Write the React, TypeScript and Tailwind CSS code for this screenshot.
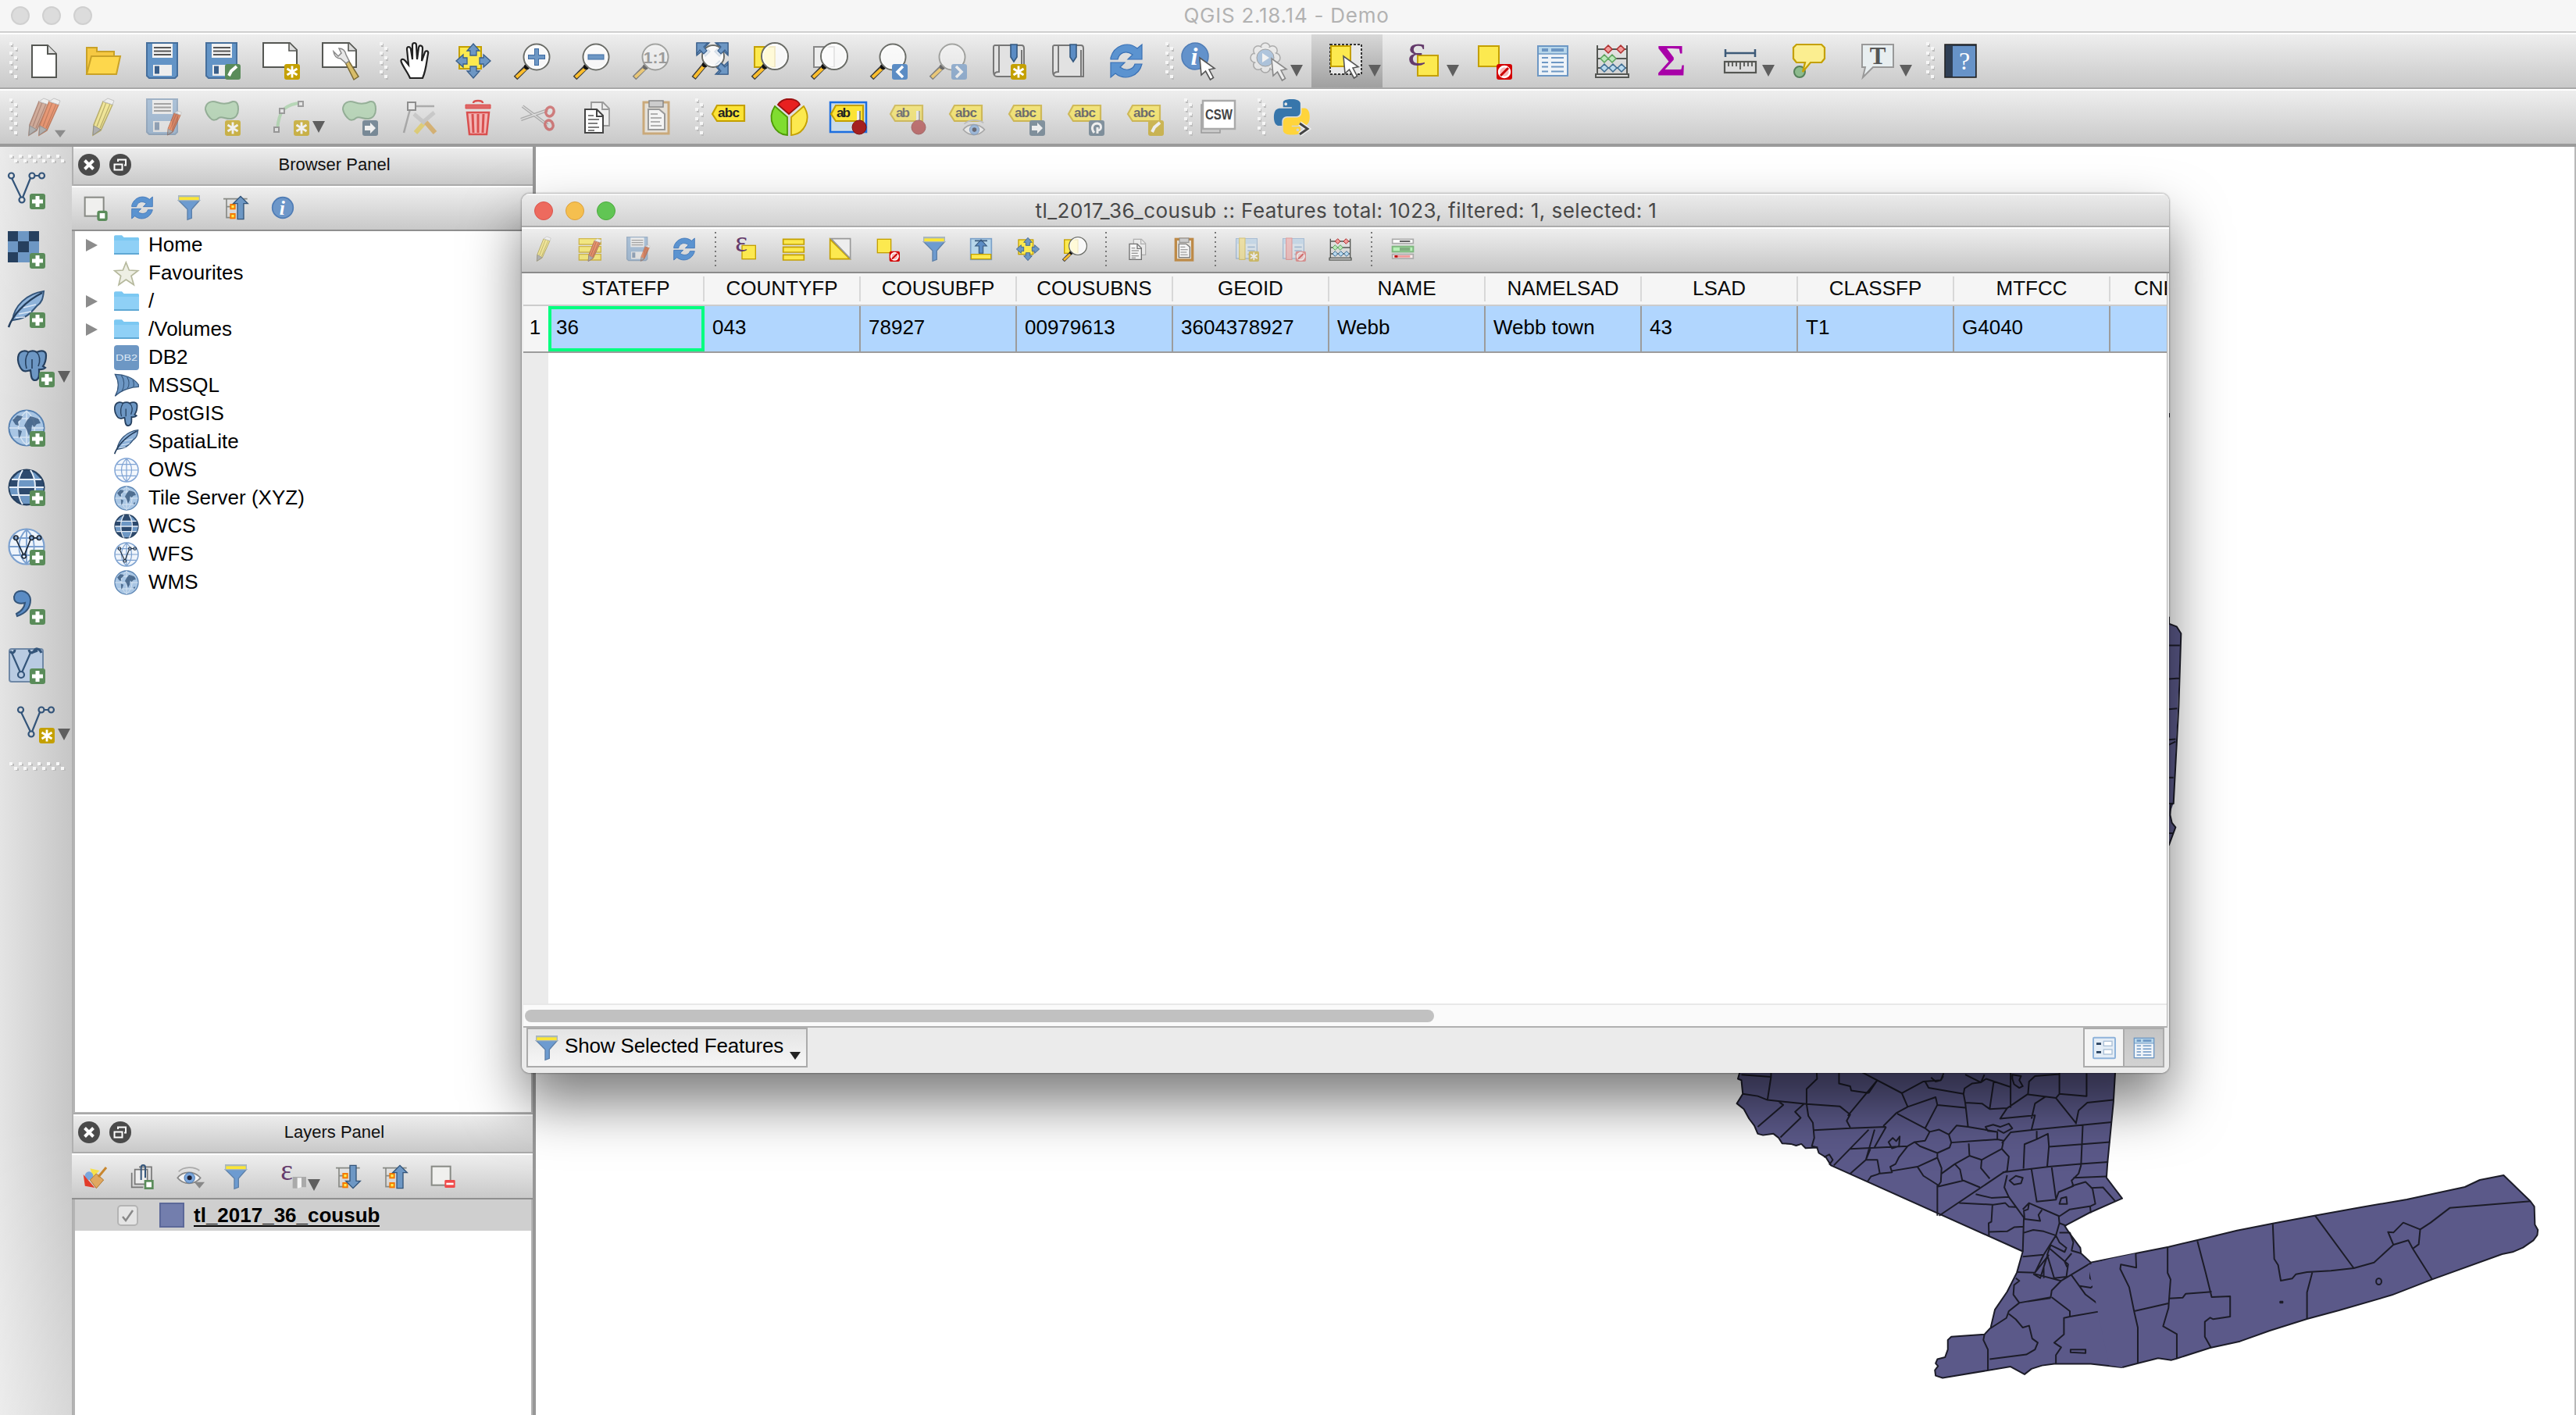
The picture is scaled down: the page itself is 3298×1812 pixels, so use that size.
import React from "react";

type P = { s?: number; o?: number };
type C = P & { children?: React.ReactNode };

const Ic = ({ s = 48, o = 1, children }: C) => (
  <svg width={s} height={s} viewBox="0 0 48 48" opacity={o} className="block shrink-0 overflow-visible" fill="none">
    {children}
  </svg>
);

/* ---------- shared icon parts ---------- */
const Badge = ({ c, k }: { c: string; k: string }) => (
  <g>
    <rect x="28" y="28" width="20" height="20" rx="3" fill={c} />
    {k === "plus" && <path d="M38 31v14M31 38h14" stroke="#fff" strokeWidth="5" />}
    {k === "star" && <path d="M38 30.500v15M31.500 34l13 8M44.500 34l-13 8" stroke="#fff" strokeWidth="2.800" />}
    {k === "pen" && <path d="M33 43l3-6 7-6" stroke="#fff" strokeWidth="4" />}
    {k === "right" && <path d="M31 35h7v-4l7 7-7 7v-4h-7z" fill="#fff" />}
    {k === "rot" && <path d="M35 44c-5-6-2-12 4-12 6 1 6 9 0 9M39 37v8" stroke="#fff" strokeWidth="3" />}
    {k === "lt" && <path d="M42 31l-7 7 7 7" stroke="#fff" strokeWidth="3.500" />}
    {k === "gt" && <path d="M34 31l7 7-7 7" stroke="#fff" strokeWidth="3.500" />}
    {k === "no" && (
      <g>
        <circle cx="38" cy="38" r="7" fill="#f7b9b9" stroke="#fff" strokeWidth="2.500" />
        <path d="M33 43l10-10" stroke="#c00" strokeWidth="3" />
      </g>
    )}
  </g>
);
const GREEN = "#5a8c5a";
const GOLD = "#c4a000";
const RED = "#d40000";
const BLUE = "#6d97c4";

const Lens = ({ cx = 29, cy = 19, r = 16.5, fill = "#fff" }: { cx?: number; cy?: number; r?: number; fill?: string }) => (
  <g>
    <path d={`M${cx - r * 0.75} ${cy + r * 0.75}L2 46`} stroke="#3a3a3a" strokeWidth="6.500" />
    <path d={`M${cx - r * 0.85} ${cy + r * 0.9}L3 45`} stroke="#fcbe2d" strokeWidth="4" />
    <circle cx={cx - r * 0.76} cy={cy + r * 0.76} r="3.500" fill="#111" />
    <circle cx={cx} cy={cy} r={r} fill={fill} fillOpacity="0.780" stroke="#6b6d68" strokeWidth="2" />
    <circle cx={cx} cy={cy} r={r - 2} stroke="#fff" strokeOpacity="0.800" strokeWidth="1.500" />
  </g>
);
const Cursor = ({ x, y }: { x: number; y: number }) => (
  <path d="M0 0l2 22 5.500-5 6 11 4-2.500-5.500-10.500 7-1.500z" transform={`translate(${x} ${y})`} fill="#fff" stroke="#555" strokeWidth="1.600" />
);
const Yel = ({ x, y, w, h }: { x: number; y: number; w: number; h: number }) => (
  <rect x={x} y={y} width={w} height={h} fill="#fce94f" stroke={GOLD} strokeWidth="2" />
);
const Arrow4 = () => (
  <g fill={BLUE} stroke="#3a5f8a" strokeWidth="1.300">
    <path d="M24 2l8 9h-4v6h-8v-6h-4z" />
    <path d="M24 46l8-9h-4v-6h-8v6h-4z" />
    <path d="M2 24l9-8v4h5v8h-5v4z" />
    <path d="M46 24l-9-8v4h-5v8h5v4z" />
  </g>
);
const Eps = ({ x = 0, y = 27, f = 44 }: { x?: number; y?: number; f?: number }) => (
  <text x={x} y={y} fontSize={f} fill="#643a6b" className="font-['Liberation_Serif',serif]">ε</text>
);

/* ---------- main toolbar ---------- */
const Floppy = () => (
  <g>
    <path d="M5 1h38v42l-3 3H7l-3-3V1z" fill="#6394c6" stroke="#466f9c" strokeWidth="2" />
    <rect x="11" y="2" width="26" height="18" fill="#f2f2f2" />
    <path d="M13 7h22M13 11.500h22M13 16h22" stroke="#555" strokeWidth="2" />
    <rect x="12" y="29" width="24" height="14" fill="#eee" />
    <rect x="14" y="30.500" width="6" height="10" fill="#3a5f8a" />
  </g>
);
const NewDoc = () => (
  <Ic>
    <path d="M9 4h20l11 11v30H9z" fill="#fff" stroke="#555753" strokeWidth="2" />
    <path d="M29 4v11h11" fill="#ddd" stroke="#555753" strokeWidth="2" />
  </Ic>
);
const FolderOpen = () => (
  <Ic>
    <path d="M3 41V7h13v5h22v8" fill="#f5c842" stroke="#c9a227" strokeWidth="2" />
    <path d="M9 18h37l-5 23H3z" fill="#fdd74c" stroke="#c9a227" strokeWidth="2" />
  </Ic>
);
const Save = () => <Ic><Floppy /></Ic>;
const SaveAs = () => <Ic><Floppy /><Badge c={GREEN} k="pen" /></Ic>;
const Page = () => (
  <g>
    <path d="M1 1h34l9 9v22H1z" fill="#fff" stroke="#555753" strokeWidth="2" />
    <path d="M34 1v10h10" fill="#ddd" stroke="#555753" strokeWidth="1.600" />
  </g>
);
const NewComposer = () => <Ic><Page /><Badge c={GOLD} k="star" /></Ic>;
const ComposerMgr = () => (
  <Ic>
    <Page />
    <path d="M30 26l4-3 13 21-6 4z" fill="#d8bd6a" stroke="#7a6a35" strokeWidth="1.500" />
    <path d="M15 12c1 6 4 9 9 9l7 6 4-3-4-8c-1-5-4-8-9-8l3 6-4 4z" fill="#e8e8e8" stroke="#888" strokeWidth="1.500" />
  </Ic>
);
const Hand = () => (
  <Ic>
    <path
      d="M17 46c-3-7-8-13-11-20-2-4 2-6 5-2l4 5L13 9c0-4 4-4 5 0l2 13V4c0-4 5-4 5 0l1 18 2-15c1-4 5-3 5 1l-1 16 4-11c1-3 5-2 4 2-2 9-2 20-7 31z"
      transform="translate(2 0)" fill="#fff" stroke="#222" strokeWidth="2.200"
    />
  </Ic>
);
const PanSel = ({ s = 48 }: P) => <Ic s={s}><Yel x={6} y={6} w={28} h={28} /><Arrow4 /></Ic>;
const ZoomIn = () => <Ic><Lens /><path d="M29 8v22M18 19h22" stroke="#3f6ca3" strokeWidth="6" /><path d="M29 9v20M19 19h20" stroke="#6d97c4" strokeWidth="4" /></Ic>;
const ZoomOut = () => <Ic><Lens /><rect x="19" y="16" width="20" height="6" fill="#6d97c4" stroke="#3f6ca3" /></Ic>;
const Zoom11 = () => (
  <Ic o={0.55}>
    <Lens />
    <text x="29" y="27" fontSize="21" textAnchor="middle" fill="#666" className="font-['Liberation_Sans',sans-serif] font-bold">1:1</text>
  </Ic>
);
const ZoomFull = () => (
  <Ic>
    <g fill={BLUE} stroke="#3a5f8a" strokeWidth="1.300">
      <path d="M6 1h16l-5 5 6 6-6 6-5-6-6 5z" />
      <path d="M46 1v16l-5-5-6 6-6-6 6-6-5-5z" />
      <path d="M46 41v-16l-5 5-6-6-6 6 6 6-5 5z" />
    </g>
    <Lens cx={27} cy={18} r={14} />
    <g fill={BLUE} stroke="#3a5f8a" strokeWidth="1.200">
      <path d="M6 1h14l-5 5 4 5-4 4-5-5-4 5zM46 1v14l-4-5-5 5-4-4 4-5-5-5zM46 41V28l-4 4-5-5-4 5 4 5-4 4z" />
    </g>
  </Ic>
);
const ZoomSel = ({ s = 48 }: P) => <Ic s={s}><Yel x={4} y={6} w={26} h={26} /><Lens cx={30} cy={18} r={17} /></Ic>;
const ZoomLayer = () => <Ic><rect x="4" y="6" width="26" height="26" fill="#eee" stroke="#888" strokeWidth="2" /><Lens cx={30} cy={18} r={17} /></Ic>;
const ZoomLast = () => <Ic><Lens /><Badge c="#5b8cc4" k="lt" /></Ic>;
const ZoomNext = () => <Ic o={0.55}><Lens /><Badge c="#5b8cc4" k="gt" /></Ic>;
const Book = () => (
  <g>
    <path d="M7 4h35c3 0 3 2 3 4v36H11c-4 0-5-2-5-6V8c0-3 0-4 2-4z" fill="#e2e2e2" stroke="#777" strokeWidth="2" />
    <path d="M13 4v34c-3 0-6 1-6 4M42 10v34" stroke="#777" strokeWidth="2" fill="none" />
    <path d="M28 3h8v16l-4 6-4-6z" fill="#5b8cc4" stroke="#34587f" strokeWidth="1.600" />
  </g>
);
const BookmarkNew = () => <Ic><Book /><Badge c={GOLD} k="star" /></Ic>;
const Bookmarks = () => <Ic><Book /></Ic>;
const Refresh = ({ s = 48 }: P) => (
  <Ic s={s}>
    <g fill="#5b93d0" stroke="#3a71b5" strokeWidth="1.200">
      <path d="M4 20C8 4 26-2 38 8l6-5v19H26l6-6c-8-6-17-3-19 6H4z" />
      <path d="M44 28C40 44 22 50 10 40l-6 5V26h18l-6 6c8 6 17 3 19-4z" />
    </g>
  </Ic>
);
const Identify = () => (
  <Ic>
    <circle cx="18" cy="18" r="17" fill="#6392cb" stroke="#4f7cb5" strokeWidth="1.500" />
    <text x="17" y="29" fontSize="32" textAnchor="middle" fill="#fff" className="font-['Liberation_Serif',serif] font-bold italic">i</text>
    <Cursor x={24} y={20} />
  </Ic>
);
const ActionIcon = () => (
  <Ic o={0.6}>
    <g transform="translate(20 20)">
      {[0, 45, 90, 135, 180, 225, 270, 315].map((a) => (
        <circle key={a} cx="0" cy="-13" r="6" transform={`rotate(${a})`} fill="#eee" stroke="#888" strokeWidth="1.500" />
      ))}
      <circle r="14" fill="#eee" />
      <circle r="11" fill="#8fb3da" stroke="#777" />
      <path d="M-4-6l9 6-9 6z" fill="#fff" />
    </g>
    <Cursor x={28} y={21} />
  </Ic>
);
const SelectIcon = () => (
  <Ic>
    <rect x="3" y="3" width="40" height="38" fill="#e8e8e8" stroke="#333" strokeWidth="2" strokeDasharray="3 2" />
    <Yel x={4} y={5} w={25} h={26} />
    <Cursor x={20} y={18} />
  </Ic>
);
const SelExpr = ({ s = 48 }: P) => <Ic s={s}><Yel x={15} y={17} w={26} h={26} /><Eps x={2} y={29} f={56} /></Ic>;
const Deselect = ({ s = 48 }: P) => <Ic s={s}><Yel x={5} y={5} w={26} h={26} /><Badge c={RED} k="no" /></Ic>;
const TableIcon = ({ s = 48 }: P) => (
  <Ic s={s}>
    <rect x="5" y="5" width="38" height="38" fill="#eef3f8" stroke={BLUE} strokeWidth="2" />
    <rect x="6" y="6" width="36" height="9" fill="#b7d6ea" />
    <path d="M10 10h8M22 10h16" stroke={BLUE} strokeWidth="4" />
    <path d="M5 15h38" stroke={BLUE} strokeWidth="1.500" />
    <path d="M10 20h8M22 20h16M10 26h8M22 26h16M10 31.500h8M22 31.500h16M10 37.500h8M22 37.500h16" stroke={BLUE} strokeWidth="2.200" />
  </Ic>
);
const Abacus = ({ s = 48 }: P) => (
  <Ic s={s}>
    <path d="M5 4v40M43 4v40M5 9h38M5 21h38M5 33h38" stroke="#555753" strokeWidth="2" />
    <rect x="3" y="41" width="42" height="4" fill="#ddd" stroke="#555753" strokeWidth="2" />
    <g fill="#f29a9a" stroke="#b03030" strokeWidth="1.500"><path d="M19 4l5 5-5 5-5-5zM35 4l5 5-5 5-5-5z" /></g>
    <g fill="#b9e8b9" stroke="#5da25d" strokeWidth="1.500"><path d="M14 16l5 5-5 5-5-5zM24 16l5 5-5 5-5-5z" /></g>
    <g fill="#b9d9ee" stroke="#3f6d92" strokeWidth="1.500"><path d="M14 28l5 5-5 5-5-5zM25 28l5 5-5 5-5-5zM36 28l5 5-5 5-5-5z" /></g>
  </Ic>
);
const Sigma = () => (
  <Ic>
    <text x="24" y="43" fontSize="57" textAnchor="middle" fill="#a800a8" className="font-['Liberation_Serif',serif] font-bold">Σ</text>
  </Ic>
);
const Ruler = () => (
  <Ic>
    <path d="M5 14h38M5 9v10M43 9v10" stroke="#3d5a78" strokeWidth="2.500" />
    <rect x="4" y="25" width="40" height="14" fill="#ddd" stroke="#555753" strokeWidth="2.200" />
    <path d="M9 25v6M14 25v6M19 25v6M24 25v10M29 25v6M34 25v6M39 25v6" stroke="#555753" strokeWidth="1.800" />
  </Ic>
);
const Tips = () => (
  <Ic>
    <ellipse cx="12" cy="38" rx="7" ry="7" fill="#8dbb8d" stroke="#55805a" strokeWidth="2" />
    <path d="M8 3h32l4 4v14l-4 5H26L16 38l3-12H8l-4-5V7z" fill="#fbee90" stroke={GOLD} strokeWidth="2.200" />
  </Ic>
);
const TextAnno = () => (
  <Ic>
    <path d="M4 3h40v29H18L5 45l3-13H4z" fill="#e8eef0" stroke="#999" strokeWidth="2" />
    <text x="24" y="28" fontSize="31" textAnchor="middle" fill="#555" className="font-['Liberation_Serif',serif] font-bold">T</text>
  </Ic>
);
const Help = () => (
  <Ic>
    <rect x="4" y="3" width="40" height="42" fill="#2f3f55" stroke="#222" strokeWidth="1.500" />
    <rect x="14" y="5" width="29" height="39" fill="#6793c8" />
    <text x="29" y="35" fontSize="32" textAnchor="middle" fill="#fff" className="font-['Liberation_Serif',serif]">?</text>
  </Ic>
);

/* ---------- editing toolbar ---------- */
const PencilShape = ({ c, d, x = 0 }: { c: string; d: string; x?: number }) => (
  <g transform={`translate(${x} 0)`}>
    <path d="M22 4l12 4-15 33-10 6 1-13z" fill={c} stroke={d} strokeWidth="1.500" />
    <path d="M26 5L14 36M31 7L18 38" stroke={d} strokeWidth="1.200" />
    <path d="M10 35l9 5-10 7z" fill="#999" stroke="#666" />
    <path d="M22 4l12 4 2-5-8-3z" fill="#f4f4f4" stroke="#aaa" />
  </g>
);
const Pencils = () => <Ic o={0.6}><PencilShape c="#c98c70" d="#8f5038" x={-4} /><PencilShape c="#ef6a30" d="#b04010" x={9} /></Ic>;
const Pencil = ({ s = 48 }: P) => <Ic s={s} o={0.6}><PencilShape c="#fbe96b" d="#a08f20" x={2} /></Ic>;
const SaveEdits = ({ s = 48 }: P) => (
  <Ic s={s}>
    <g opacity="0.450"><Floppy /></g>
    <g transform="translate(22 16) scale(.66)" opacity="0.650"><PencilShape c="#ef6a30" d="#b04010" x={4} /></g>
  </Ic>
);
const Blob = () => (
  <path d="M3 14c0-8 7-12 15-9s14 2 20-1c6-1 7 5 7 10 0 6-3 11-9 12-7 1-12-4-16-1-3 3-8 4-11 0-3-3-5-6-6-11z" fill="#a5cfa5" stroke="#6c9470" strokeWidth="2" />
);
const AddFeature = () => <Ic o={0.65}><Blob /><Badge c={GOLD} k="star" /></Ic>;
const MoveFeature = () => <Ic o={0.65}><Blob /><Badge c="#4a6478" k="right" /></Ic>;
const Circular = () => (
  <Ic o={0.65}>
    <path d="M7 40c1-12 3-20 8-26 6-5 14-8 23-8" stroke="#9fcf9f" strokeWidth="4" />
    <g fill="#e6e6e6" stroke="#777" strokeWidth="2">
      <rect x="3" y="37" width="6" height="6" /><rect x="10" y="13" width="6" height="6" /><rect x="34" y="4" width="6" height="6" />
    </g>
    <Badge c={GOLD} k="star" />
  </Ic>
);
const NodeTool = () => (
  <Ic o={0.6}>
    <path d="M14 10L5 44M14 10h30" stroke="#888" strokeWidth="2.500" />
    <rect x="10" y="5" width="10" height="10" fill="#eee" stroke="#555" strokeWidth="2" />
    <path d="M20 44l14-16" stroke="#e3c73d" strokeWidth="6" />
    <path d="M45 44L31 28" stroke="#d49a35" strokeWidth="6" />
    <path d="M18 20l14 12M44 18L30 30" stroke="#bbb" strokeWidth="5" />
  </Ic>
);
const Trash = () => (
  <Ic>
    <g stroke="#d9504f" fill="none" strokeWidth="2.500">
      <path d="M18 6c0-4 12-4 12 0" />
      <path d="M8 8h32v5H8z" fill="#e06666" strokeWidth="1" />
      <path d="M10 18h28l-3 28H13z" fill="#f3b5b5" />
      <path d="M17 20l1 24M24 20v24M31 20l-1 24" strokeWidth="3" />
    </g>
  </Ic>
);
const Scissors = () => (
  <Ic o={0.6}>
    <path d="M5 10l32 24M3 27l34-12" stroke="#888" strokeWidth="4" />
    <path d="M5 10l32 24M3 27l34-12" stroke="#ddd" strokeWidth="1.500" />
    <ellipse cx="40" cy="17" rx="5" ry="6" stroke="#c43c3c" strokeWidth="3.500" transform="rotate(20 40 17)" />
    <ellipse cx="39" cy="34" rx="5" ry="6" stroke="#c43c3c" strokeWidth="3.500" transform="rotate(-20 39 34)" />
  </Ic>
);
const CopyIcon = ({ s = 48, o = 1 }: P) => (
  <Ic s={s} o={o}>
    <path d="M17 5h15l8 8v22H17z" fill="#eee" stroke="#999" strokeWidth="1.800" />
    <path d="M31 5v9h9" stroke="#999" strokeWidth="1.800" />
    <path d="M9 14h15l8 8v22H9z" fill="#fff" stroke="#444" strokeWidth="2" />
    <path d="M24 14v9h8" stroke="#444" strokeWidth="2" />
    <path d="M13 22h7M13 27h14M13 32h12M13 37h14M13 41h8" stroke="#555" strokeWidth="1.600" />
  </Ic>
);
const PasteIcon = ({ s = 48, dark }: P & { dark?: boolean }) => (
  <Ic s={s}>
    <rect x="8" y="5" width="32" height="40" fill="#e4e0d8" stroke={dark ? "#bd8a48" : "#caa97a"} strokeWidth={dark ? 5 : 3} />
    <rect x="15" y="3" width="18" height="8" fill="#ccc" stroke="#888" strokeWidth="1.500" />
    <path d="M14 14h14l7 6v20H14z" fill="#f4f4f4" stroke={dark ? "#777" : "#999"} strokeWidth="2" />
    <path d="M17 20h9M17 25h14M17 30h12M17 35h14" stroke={dark ? "#888" : "#999"} strokeWidth="1.600" />
  </Ic>
);
const Tag = ({ t = "abc" }: { t?: string }) => (
  <g>
    <path d="M2 20l6-11h35v20H8z" fill="#fbe336" stroke={GOLD} strokeWidth="2.200" />
    <text x="9" y="24" fontSize="17" textLength={t === "abc" ? 28 : 18} fill="#222" className="font-['Liberation_Sans',sans-serif] font-bold">{t}</text>
  </g>
);
const Label = () => <Ic><Tag /></Ic>;
const Diagram = () => (
  <Ic>
    <path d="M22 1h6c7 1 10 4 11 7L25 20 11 8c2-3 5-6 11-7z" fill="#e82020" stroke="#9b1010" strokeWidth="1.800" transform="translate(-1 0)" />
    <path d="M6 10l16 14v23C6 46-5 27 6 10z" fill="#80dd30" stroke="#4e9a06" strokeWidth="1.800" />
    <path d="M43 10L27 24v23c16-1 27-20 16-37z" fill="#fce94f" stroke={GOLD} strokeWidth="1.800" />
  </Ic>
);
const Pin = () => (
  <g>
    <path d="M37 16v16" stroke="#eee" strokeWidth="4" />
    <path d="M39 16v16" stroke="#666" strokeWidth="1.500" />
    <circle cx="38" cy="37" r="9" fill="#a52020" stroke="#7c1010" />
  </g>
);
const LabelPinBox = () => (
  <Ic>
    <rect x="1" y="5" width="46" height="38" fill="#ccdbe6" stroke="#1c6ee0" strokeWidth="2.500" />
    <Tag t="ab" /><Pin />
  </Ic>
);
const LabelPin = () => <Ic o={0.55}><Tag t="ab" /><Pin /></Ic>;
const EyeShape = () => (
  <g>
    <path d="M2 26C12 12 34 12 46 26 34 40 14 40 2 26z" fill="#f4f4f4" stroke="#888" strokeWidth="2.500" />
    <circle cx="25" cy="26" r="10" fill="#7ba7dc" stroke="#4d79b0" strokeWidth="1.500" />
    <circle cx="25" cy="26" r="4.500" fill="#223" />
    <path d="M4 14C14 4 34 4 44 12" stroke="#aaa" strokeWidth="2.500" />
  </g>
);
const LabelEye = () => <Ic o={0.6}><Tag /><g transform="translate(18 24) scale(.62)"><EyeShape /></g></Ic>;
const LabelMove = () => <Ic o={0.6}><Tag /><Badge c="#4a6478" k="right" /></Ic>;
const LabelRot = () => <Ic o={0.6}><Tag /><Badge c="#4a6478" k="rot" /></Ic>;
const LabelEdit = () => <Ic o={0.6}><Tag /><Badge c={GOLD} k="pen" /></Ic>;
const CswIcon = () => (
  <Ic>
    <rect x="2" y="8" width="24" height="36" fill="#ccc" stroke="#999" strokeWidth="1.500" />
    <rect x="4" y="3" width="41" height="36" fill="#fff" stroke="#aaa" strokeWidth="2.500" />
    <text x="24.500" y="27" fontSize="19" textLength="35" lengthAdjust="spacingAndGlyphs" textAnchor="middle" fill="#444" className="font-['Liberation_Sans',sans-serif] font-bold">CSW</text>
  </Ic>
);
const PY =
  "M14.250.18l.9.2.73.26.59.3.45.32.34.34.25.34.16.33.1.3.04.26.02.2-.01.13V8.500l-.05.63-.13.55-.21.46-.26.38-.3.31-.33.25-.35.19-.35.14-.33.1-.3.07-.26.04-.21.02H8.770l-.69.05-.59.14-.5.22-.41.27-.33.32-.27.35-.2.36-.15.37-.1.35-.07.32-.04.27-.02.21v3.060H3.170l-.21-.03-.28-.07-.32-.12-.35-.18-.36-.26-.36-.36-.35-.46-.32-.59-.28-.73-.21-.88-.14-1.050-.05-1.230.06-1.220.16-1.040.24-.87.32-.71.36-.57.4-.44.42-.33.42-.24.4-.16.36-.1.32-.05.24-.01h.16l.06.01h8.160v-.83H6.180l-.01-2.750-.02-.37.05-.34.11-.31.17-.28.25-.26.31-.23.38-.2.44-.18.51-.15.58-.12.64-.1.71-.06.77-.04.84-.02 1.270.05zM8 2.300a1 1 0 1 0 .010 0z";
const Python = () => (
  <Ic>
    <g transform="translate(1 1) scale(1.900)" fillRule="evenodd">
      <path d={PY} fill="#3776ab" />
      <path d={PY} fill="#ffd43b" transform="rotate(180 12 12)" />
    </g>
    <path d="M34 32l10 7-10 7" stroke="#eee" strokeWidth="6" />
    <path d="M34 32l10 7-10 7" stroke="#444" strokeWidth="3" />
  </Ic>
);

/* ---------- layer toolbar (left) ---------- */
const VShape = ({ c = "#34557a" }: { c?: string }) => (
  <g stroke={c} strokeWidth="2.200">
    <path d="M5 8l12 25M19 33L29 8M34 5h6" />
    <circle cx="4.500" cy="5" r="3.500" /><circle cx="31" cy="5" r="3.500" /><circle cx="43.500" cy="5" r="3.500" /><circle cx="18" cy="36" r="3.500" />
  </g>
);
const Plus = () => <Badge c={GREEN} k="plus" />;
const AddVector = () => <Ic><VShape /><Plus /></Ic>;
const NewVector = () => <Ic><VShape /><Badge c={GOLD} k="star" /></Ic>;
const AddRaster = () => (
  <Ic>
    <rect width="40" height="40" fill="#6d97c4" />
    <path d="M0 0h13v13H0zM27 0h13v13H27zM13 13h14v14H13zM0 27h13v13H0z" fill="#26405f" />
    <Plus />
  </Ic>
);
const FeatherShape = () => (
  <g>
    <path d="M6 38C8 20 24 4 46 1c-1 9-2 14-9 19-4 4-9 12-18 15-5 2-9 2-13 3z" fill="#8fb3da" stroke="#34557a" strokeWidth="2" />
    <path d="M1 47C6 32 22 14 44 3" stroke="#26405f" strokeWidth="2.500" />
    <path d="M14 30l16-3M20 22l16-4M10 35l12-1" stroke="#dce8f5" strokeWidth="1.500" />
  </g>
);
const AddLite = () => <Ic><FeatherShape /><Plus /></Ic>;
const ElephantShape = () => (
  <g fill={BLUE} stroke="#26405f" strokeWidth="2.200">
    <path d="M13 27C4 30-1 14 2 6 5 0 12 1 14 3c4-2 8-2 11 0 6-3 12-2 12 4 0 6-1 10-4 14l3 2c-3 3-6 2-8 2 0 6 1 13-5 14-6 0-5-8-6-13z" />
    <path d="M14 4c-4 6-4 13-2 20M25 3c4 4 5 11 2 18M19 12v12" fill="none" strokeWidth="1.600" />
  </g>
);
const AddPg = () => <Ic><ElephantShape /><Plus /></Ic>;
const WorldShape = () => (
  <g>
    <circle cx="24" cy="24" r="22.500" fill="#a9c6e4" stroke="#5680b0" strokeWidth="2" />
    <path d="M2 24h44M24 2v44M7 12h34M7 36h34M24 2c-14 12-14 32 0 44M24 2c14 12 14 32 0 44" stroke="#d6e4f2" strokeWidth="1.500" />
    <path d="M6 14l6-6 7 1-2 4-4 3 1 5-4-1zM13 26l5 2-2 7-2 2zM24 15l5-6 10 3 3 6-5 1-3 4-3-3-1 8-3 6-3-8-3-5zM37 33l4-1-2 5z" fill="#34557a" opacity="0.800" />
  </g>
);
const GridGlobe = ({ c, bg }: { c: string; bg: string }) => (
  <g>
    <circle cx="24" cy="24" r="22.500" fill={bg} stroke={c} strokeWidth="2.200" />
    <path d="M2 24h44M24 2v44M6 13h36M6 35h36M24 2c-13 12-13 32 0 44M24 2c13 12 13 32 0 44" stroke={c} strokeWidth="1.800" />
  </g>
);
const WcsShape = () => (
  <g>
    <circle cx="24" cy="24" r="22.500" fill="#2d4a6e" stroke="#26405f" strokeWidth="2" />
    <path d="M14 14h20v10H14zM2 24h12v10H4zM34 24h12l-2 10H34zM14 34h20l-6 11h-8zM6 13l7-7 6-3-5 11zM42 13l-7-7-6-3 5 11z" fill="#6d97c4" />
    <path d="M2 24h44M5 14h38M5 34h38M19 2c-8 12-8 32 0 44M29 2c8 12 8 32 0 44" stroke="#e6eef7" strokeWidth="2" />
  </g>
);
const WfsShape = () => <g><GridGlobe c="#7ba0cf" bg="#eef4fb" /><g transform="translate(7 9) scale(.76)"><VShape c="#1d2a3a" /></g></g>;
const AddWms = () => <Ic><WorldShape /><Plus /></Ic>;
const AddWcs = () => <Ic><WcsShape /><Plus /></Ic>;
const AddWfs = () => <Ic><WfsShape /><Plus /></Ic>;
const Comma = () => (
  <Ic>
    <path d="M8 13C8 1 28 2 29 16c0 12-8 18-17 21l-1-3c6-3 10-7 11-14-7 2-14 0-14-7z" fill="#5b8cc4" stroke="#34557a" strokeWidth="2" />
    <Plus />
  </Ic>
);
const Virtual = () => (
  <Ic>
    <rect x="2" y="3" width="43" height="42" rx="3" fill="#b9cbe2" stroke="#6f88a6" strokeWidth="2" />
    <path d="M5 8l11 25M18 33L29 8" stroke="#34557a" strokeWidth="2.200" />
    <path d="M3 6c3 4 6 1 6-2M27 4c1 5 5 5 7 1s7-2 9 3M30 8l8-3" stroke="#34557a" strokeWidth="3" />
    <circle cx="17" cy="36" r="4" stroke="#34557a" strokeWidth="2.200" />
    <Plus />
  </Ic>
);

/* ---------- panel icons ---------- */
const SqAdd = () => (
  <Ic s={32}>
    <rect x="4" y="4" width="36" height="36" fill="#f0f0ee" stroke="#888a85" strokeWidth="3" />
    <rect x="30" y="32" width="15" height="15" rx="2" fill="#fff" stroke={GREEN} strokeWidth="5" />
  </Ic>
);
const SqRemove = () => (
  <Ic s={32}>
    <rect x="4" y="4" width="36" height="36" fill="#f0f0ee" stroke="#888a85" strokeWidth="3" />
    <rect x="29" y="30" width="20" height="15" rx="2" fill="#ef4a4a" />
    <path d="M32 37.500h14" stroke="#fff" strokeWidth="4" />
  </Ic>
);
const Funnel = () => (
  <Ic s={32}>
    <path d="M4 10h40L29 27v17l-8 3V27z" fill="#6d9bd0" stroke="#5c7fa8" strokeWidth="2" />
    <rect x="3" y="0" width="42" height="11" fill="#a9b7bd" />
    <rect x="5" y="3.500" width="38" height="5.500" fill="#fbe636" />
  </Ic>
);
const TreeArrow = ({ up }: { up?: boolean }) => (
  <Ic s={32}>
    <path d="M0 7h46M6 7v36h16M6 22h14" stroke="#888a85" strokeWidth="2.500" />
    <rect x="14" y="18" width="8" height="8" fill="#fce94f" stroke="#f57900" strokeWidth="3" />
    <rect x="14" y="36" width="8" height="8" fill="#fce94f" stroke="#f57900" strokeWidth="3" />
    <path d="M27 46V16h-8L33 2l14 14h-8v30z" fill={BLUE} stroke="#34557a" strokeWidth="2" transform={up ? undefined : "translate(0 48) scale(1 -1)"} />
  </Ic>
);
const InfoDot = () => (
  <Ic s={32}>
    <circle cx="24" cy="24" r="20" fill="#6d97c9" stroke="#4f7cb5" strokeWidth="2.500" />
    <text x="23" y="37" fontSize="38" textAnchor="middle" fill="#fff" className="font-['Liberation_Serif',serif] font-bold italic">i</text>
  </Ic>
);
const Brush = () => (
  <Ic s={32}>
    <path d="M14 8l18 4-12 12z" fill="#f7e24a" />
    <circle cx="12" cy="22" r="8" fill="#7ba7dc" />
    <path d="M4 26l14 16-12-2z" fill="#e23c2a" stroke="#e23c2a" strokeWidth="4" />
    <path d="M14 30l12-12 14 12-14 16z" fill="#e0a860" stroke="#b07830" strokeWidth="1.500" />
    <path d="M30 24L45 6" stroke="#c8862e" strokeWidth="4.500" />
  </Ic>
);
const AddGroup = () => (
  <Ic s={32}>
    <path d="M4 16v28h22" stroke="#777" strokeWidth="2.500" />
    <path d="M10 10h24v28H10z" fill="#eee" stroke="#777" strokeWidth="2.500" />
    <path d="M18 5h24v28" stroke="#777" strokeWidth="2.500" />
    <path d="M22 30V6c0-6 8-6 8 0v20" stroke="#34557a" strokeWidth="3" />
    <rect x="30" y="32" width="14" height="14" fill="#fff" stroke={GREEN} strokeWidth="4" />
  </Ic>
);
const EyeIcon = () => <Ic s={32}><EyeShape /><path d="M34 34h20L44 46z" fill="#888" /></Ic>;
const EpsFilter = () => (
  <Ic s={32}>
    <Eps x={-1} y={30} f={56} />
    <path d="M22 24h26v20H38V32h-6v14H22z" fill="#aaa" /><path d="M31 26h8v18l-8 2z" fill="#f4f4f4" />
  </Ic>
);
const EditMulti = () => (
  <Ic s={32} o={0.65}>
    <path d="M2 4h42v11H2zM2 19h42v11H2zM2 34h42v11H2z" fill="#fce94f" stroke={GOLD} strokeWidth="2" />
    <g transform="translate(6 4) scale(.92)"><PencilShape c="#ef6a30" d="#8a3510" x={6} /></g>
  </Ic>
);
const SelectAll = () => (
  <Ic s={32}><path d="M4 5h40v10H4zM4 20h40v10H4zM4 35h40v10H4z" fill="#fce94f" stroke={GOLD} strokeWidth="2.500" /></Ic>
);
const Invert = () => (
  <Ic s={32}>
    <path d="M4 5v38h38z" fill="#fce94f" stroke={GOLD} strokeWidth="2.500" />
    <path d="M6 4h37v38z" fill="#eee" stroke="#999" strokeWidth="2.500" />
  </Ic>
);
const MoveTop = () => (
  <Ic s={32}>
    <rect x="4" y="4" width="40" height="40" fill="#b7d6ea" stroke="#7ba0c8" strokeWidth="2.500" />
    <path d="M5 34h38v9H5z" fill="#fce94f" stroke={GOLD} strokeWidth="2" />
    <path d="M20 32V18h-7L24 6l11 12h-7v14z" fill="#5b8cc4" stroke="#34557a" strokeWidth="1.600" />
    <path d="M12 8h24" stroke="#34557a" strokeWidth="2.500" />
  </Ic>
);
const Field = ({ c, k, bc }: { c: string; k: string; bc: string }) => (
  <Ic s={32} o={0.5}>
    <rect x="4" y="4" width="40" height="38" fill="#d5e5f2" stroke={BLUE} strokeWidth="2" />
    <rect x="5" y="5" width="38" height="9" fill="#a9cbe8" />
    <path d="M26 20h14M26 27h14M26 34h14" stroke={BLUE} strokeWidth="2.500" />
    <rect x="10" y="3" width="11" height="41" fill={c} stroke={bc} strokeWidth="1.500" />
    <Badge c={bc} k={k} />
  </Ic>
);
const Conditional = () => (
  <Ic s={32}>
    <rect x="4" y="5" width="40" height="8" fill="#fff" stroke="#aaa" strokeWidth="2.500" />
    <path d="M18 9h20" stroke="#666" strokeWidth="3" />
    <rect x="4" y="19" width="40" height="10" fill="#b6f0b6" stroke="#7db77d" strokeWidth="3" />
    <rect x="18" y="21" width="20" height="6" fill="#7fae7f" />
    <rect x="4" y="34" width="40" height="8" fill="#fbeaea" stroke="#aaa" strokeWidth="2.500" />
    <path d="M10 38h28" stroke="#f09a9a" strokeWidth="4" /><path d="M8 38h6" stroke="#b00" strokeWidth="4" />
  </Ic>
);
const FormIcon = () => (
  <Ic s={32}>
    <rect x="3" y="4" width="42" height="40" rx="2" fill="#e4edf6" stroke="#8fb3da" strokeWidth="3" />
    <path d="M9 16h9M9 32h9" stroke="#26405f" strokeWidth="4" />
    <rect x="23" y="11" width="16" height="9" fill="#fff" stroke="#a9bfd6" strokeWidth="2" /><rect x="23" y="27" width="16" height="9" fill="#fff" stroke="#a9bfd6" strokeWidth="2" />
  </Ic>
);

/* ---------- tree icons ---------- */
const Folder = () => (
  <Ic s={32}>
    <path d="M0 42V8c0-2 1-3 3-3h12l4 4h26c2 0 3 1 3 3v30z" fill="#7cc8f2" />
    <path d="M0 15h48v25H0z" fill="#8fd0f6" /><path d="M0 39h48v3H0z" fill="#5fa8d4" />
  </Ic>
);
const Star = () => (
  <Ic s={32}><path d="M23 3l6 15 17 1-13 10 5 17-15-10-14 10 4-17L1 19l16-1z" fill="#eeefe4" stroke="#b5b89c" strokeWidth="2.500" /></Ic>
);
const Db2 = () => (
  <Ic s={32}>
    <rect width="48" height="48" rx="6" fill="#6d97c4" />
    <text x="24" y="30" fontSize="17" textLength="42" lengthAdjust="spacingAndGlyphs" textAnchor="middle" fill="#dce8f5" className="font-['Liberation_Sans',sans-serif]">DB2</text>
  </Ic>
);
const Mssql = () => (
  <Ic s={32}>
    <path d="M2 2c16 0 36 6 45 20v4C34 26 14 32 2 44c8-14 8-28 0-42z" fill={BLUE} stroke="#34557a" strokeWidth="1.800" />
    <path d="M14 4c6 8 7 20 1 31M25 7c4 7 5 15 1 22M36 13c2 4 3 9 1 13" stroke="#34557a" strokeWidth="1.600" />
  </Ic>
);

/* ---------- building blocks ---------- */
const Down = ({ small }: { small?: boolean }) => (
  <svg width={small ? 14 : 16} height={small ? 10 : 16} viewBox="0 0 16 16" preserveAspectRatio="none" className="block" opacity={small ? 0.6 : 1}>
    <path d="M0 1h16L8 16z" fill="#5f5f5f" />
  </svg>
);
const Slot = ({ children }: C) => <div className="flex w-[76px] shrink-0 justify-center">{children}</div>;
const Drop = ({ children, on }: C & { on?: boolean }) => (
  <div className={on ? "flex h-full w-[100px] shrink-0 items-center bg-[linear-gradient(#d8d8d8,#a0a0a0)] bg-[length:91px_100%] bg-[position:5px_0] bg-no-repeat pl-[26px]" : "flex h-full w-[100px] shrink-0 items-center pl-[26px]"}>
    {children}
    <div className="ml-1 pt-6"><Down /></div>
  </div>
);
const Grip = () => (
  <div className="flex w-[18px] shrink-0 justify-end">
    <svg width="12" height="48" className="-mr-1.5 block">
      {[0, 1, 2, 3].map((i) => (
        <g key={i}>
          <rect x="2" y={i * 12 + 2} width="3" height="4" fill="#bdbdbd" /><rect x="0" y={i * 12} width="4" height="4" fill="#f6f6f6" />
          <rect x="8" y={i * 12 + 8} width="3" height="4" fill="#bdbdbd" /><rect x="6" y={i * 12 + 6} width="4" height="4" fill="#f6f6f6" />
        </g>
      ))}
    </svg>
  </div>
);
const GripH = () => (
  <svg width="72" height="12" className="ml-3 block shrink-0">
    {[0, 1, 2, 3, 4, 5].map((i) => (
      <g key={i}>
        <rect x={i * 12 + 2} y="2" width="4" height="3" fill="#bdbdbd" /><rect x={i * 12} y="0" width="4" height="4" fill="#f8f8f8" />
        <rect x={i * 12 + 8} y="8" width="4" height="3" fill="#bdbdbd" /><rect x={i * 12 + 6} y="6" width="4" height="4" fill="#f8f8f8" />
      </g>
    ))}
  </svg>
);
const Bar = ({ children, h }: C & { h: string }) => (
  <div className={`flex shrink-0 items-center border-t-2 border-t-white bg-[linear-gradient(#eeeeee,#c9c9c9)] ${h}`}>{children}</div>
);
const PanelTitle = ({ title }: { title: string }) => (
  <div className="flex h-[50px] shrink-0 items-center gap-3 border-t-2 border-b-2 border-t-white border-b-[#ababab] bg-[linear-gradient(#ececec,#c9c9c9)] pl-[6px]">
    <svg width="28" height="28" viewBox="0 0 28 28" className="-mt-1"><circle cx="14" cy="14" r="14" fill="#4a4a4a" /><path d="M8.500 8.500l11 11M19.500 8.500l-11 11" stroke="#fff" strokeWidth="4" /></svg>
    <svg width="28" height="28" viewBox="0 0 28 28" className="-mt-1" fill="none"><circle cx="14" cy="14" r="14" fill="#4a4a4a" /><path d="M6.500 13.500h10v7h-10zM11 10V7.500h10v7h-2" stroke="#fff" strokeWidth="2" /></svg>
    <div className="mr-[6px] -mt-1 flex-1 text-center text-[22px] leading-[28px] text-[#111]">{title}</div>
  </div>
);
const S60 = ({ children }: C) => <div className="flex w-[60px] shrink-0 justify-center">{children}</div>;

const tree: [string, React.ReactNode, boolean][] = [
  ["Home", <Folder />, true],
  ["Favourites", <Star />, false],
  ["/", <Folder />, true],
  ["/Volumes", <Folder />, true],
  ["DB2", <Db2 />, false],
  ["MSSQL", <Mssql />, false],
  ["PostGIS", <Ic s={32}><g transform="scale(1.200)"><ElephantShape /></g></Ic>, false],
  ["SpatiaLite", <Ic s={32}><FeatherShape /></Ic>, false],
  ["OWS", <Ic s={32}><GridGlobe c="#7fa3d4" bg="#f4f8fd" /></Ic>, false],
  ["Tile Server (XYZ)", <Ic s={32}><WorldShape /></Ic>, false],
  ["WCS", <Ic s={32}><WcsShape /></Ic>, false],
  ["WFS", <Ic s={32}><WfsShape /></Ic>, false],
  ["WMS", <Ic s={32}><WorldShape /></Ic>, false],
];

const columns: [string, string][] = [
  ["STATEFP", "36"], ["COUNTYFP", "043"], ["COUSUBFP", "78927"], ["COUSUBNS", "00979613"], ["GEOID", "3604378927"],
  ["NAME", "Webb"], ["NAMELSAD", "Webb town"], ["LSAD", "43"], ["CLASSFP", "T1"], ["MTFCC", "G4040"], ["CNECTAFP", ""],
];

/* ---------- map canvas ---------- */
const NS = { vectorEffect: "non-scaling-stroke" as const };
const MapCanvas = () => (
  <svg width="2610" height="1624" viewBox="686 188 2610 1624" className="block" fill="none" stroke="#1c1c28" strokeWidth="2" strokeLinejoin="round">
    <g transform="translate(2150 1260) scale(.44643 .35204)">
      <path fill="#5b5989" stroke="none" d="M178 300L168 345 178 350 182 400 165 435 185 455 200 490 215 515 225 545 240 550 270 545 285 560 295 580 320 582 335 588 350 582 362 597 395 595 400 615 420 630 435 660 985 973 968 1050 940 1120 905 1185 893 1250 875 1275 780 1283 770 1295 770 1330 762 1358 740 1365 735 1380 742 1390 733 1405 735 1425 755 1433 950 1392 990 1420 1010 1400 1040 1388 1075 1382 1180 1382 1270 1395 1310 1382V980L1180 1013 1152 980 1150 960 1118 905 1105 880 1175 833 1270 780 1225 705 1228 650 1235 560 1245 430 1251 300z" />
      <path {...NS} d="M178 300L168 345 178 350 182 400 165 435 185 455 200 490 215 515 225 545 240 550 270 545 285 560 295 580 320 582 335 588 350 582 362 597 395 595 400 615 420 630 435 660 985 973 968 1050 940 1120 905 1185 893 1250 875 1275 780 1283 770 1295 770 1330 762 1358 740 1365 735 1380 742 1390 733 1405 735 1425 755 1433 950 1392 990 1420 1010 1400 1040 1388 1075 1382 1180 1382 1270 1395M1251 300L1245 430 1235 560 1228 650 1225 705 1270 780 1175 833 1105 880 1118 905 1150 960 1152 980 1180 1013 1310 980" />
      <path {...NS} d="M178 330L263 338 253 420M182 400L225 408 253 422 365 437 460 445 490 475 480 498 490 522M263 300V338M393 300L395 345 365 382V437M225 520L298 440 285 428M290 558L348 487 332 465 357 437M365 437L370 480 383 505 387 560 380 590 397 595M387 532L490 525 593 520M458 300V362L490 372 493 388 543 397M568 350L483 480M525 322L638 397 655 447 622 470 585 517M568 350L543 397M638 397L700 355 750 350 758 325M705 355L715 378 815 400 820 432 868 435 890 455M655 447L735 412 740 440 705 525 625 472M740 440L820 450M820 432L828 520M705 525L718 538 705 570 675 575 690 590 740 615M718 538L745 530 773 548 795 515 828 520 912 538V565L780 577 773 548M780 577L775 595 740 615M443 660L543 530M490 600L655 590 675 575M490 690L535 640 560 530M558 598L593 520M535 640L568 640 575 690 550 700 540 718M548 600L535 640M655 590L630 630 620 655 605 665 610 685 570 690M610 680L683 665 740 632V615M683 665L700 698 740 730V843M740 632L752 670 750 720 740 738 815 715 862 740M752 690L790 655 805 675 812 718M790 655L832 625 830 580M832 625L867 640 925 600 930 570 912 565M867 640L865 670 890 708M925 600L945 628 940 680 927 688 745 843M940 695L932 740 945 775 965 810 988 850 985 973M850 765L895 778 945 775M803 797L900 803 935 797 945 810 965 812M898 803L895 865 887 870 888 918M890 902L940 900 960 885 988 883M815 400L818 380 840 362 865 358 880 345 950 375M820 330L865 358 875 330M902 352L890 455 940 452 1000 400 1003 355 1020 335 1090 328M950 320V450M940 452L920 490 1020 478 1010 530M955 330L980 335 975 350 985 372 975 378 960 365 955 345zM722 340L735 355 750 350 757 335M1090 320V400L1168 408V325M1000 402L1080 415 1090 400M1050 410L1020 435 1010 490M1080 415L1137 505M1244 422L1170 432 1145 460 1137 510M912 538L885 535 878 520 900 512 920 520 945 508 955 525 930 542 912 530M925 580L950 540 1020 530 1240 503M1025 535V565L990 583 987 672M1025 565L1057 545 1060 590 1055 665M1060 592L1235 575M1157 515L1152 660M927 685L1060 665 1150 655 1230 648M1152 660L1145 690 1125 715 1130 735 1088 757 1080 785 1025 792 1010 675M1068 668L1080 780M1130 705L1225 700M1125 735L1165 720 1185 745 1193 800 1180 808 1120 820 1090 845 1003 797 985 820M1180 742L1215 740 1250 790M1178 808L1180 833M1088 845L1090 870 1080 915 1045 900 1015 895 988 905M1003 797L1000 820 988 825 990 855 1035 862 1030 840 1040 822M1090 870L1110 880M1095 780L1110 775 1112 800 1090 800zM1080 915L1045 985 985 992M1080 915L1090 940 1110 960 1105 975 1065 950M1090 905L1120 905 1130 940 1125 970 1152 980M1045 985L1020 1050 970 1048M1065 950L1055 985 1075 1070 1110 1065 1115 1020 1060 960M1125 980L1105 1010 1112 1030M1020 1050L1060 985M1055 990L1035 1070 1015 1055M1020 1055L1095 1080 1180 1015M1045 1030V1070M1095 1080L1068 1115 1065 1140 975 1160 958 1130 960 1095 975 1080 965 1070M975 1160L945 1190 938 1215 893 1252M945 1200L965 1220 985 1250 1003 1243 1012 1290 1028 1305 1020 1330 995 1348 890 1365M875 1275L872 1295 885 1330V1405M1068 1140L1120 1190V1210L1225 1187 1165 1130 1125 1060M1180 1015L1178 1070 1195 1090 1180 1105 1145 1098M1225 1190L1262 1195 1273 1230V1395M1120 1210L1103 1215V1275L1075 1305 1095 1322 1080 1350V1382M1122 1330H1165V1343L1122 1340zM1000 1155L1065 1143M415 630L430 620 440 640 430 658M600 575L612 560 622 572 632 555 630 590 610 598zM947 715L965 698 985 705 980 725 960 730z" />
    </g>
    <g transform="translate(2700 1450) scale(.38138 .33333)">
      <path fill="#5b5989" stroke="none" d="M-70 510L0 487 90 465 200 440 300 413 430 377 550 350 690 320 850 287 1000 258 1195 210 1245 183 1325 165 1415 265 1428 285 1430 355 1440 375 1438 395 1425 415 1390 443 1355 460 1320 468 1085 565 950 625 770 685 665 717 540 762 440 803 340 828 225 870 210 875 165 868 95 888 45 903 0 895z" />
      <path {...NS} d="M90 465L200 440 300 413 430 377 550 350 690 320 850 287 1000 258 1195 210 1245 183 1325 165 1415 265 1428 285 1430 355 1440 375 1438 395 1425 415 1390 443 1355 460 1320 468 1085 565 950 625 770 685 665 717 540 762 440 803 340 828 225 870 210 875 165 868 95 888 45 903" />
      <path {...NS} d="M90 465L92 520 40 508 38 525 68 595 85 690 97 750V888M85 687L200 657M197 440V540L207 565 202 640 200 675 182 745 228 775V870M202 638L248 635 258 620 345 613M297 418L325 540 345 633 407 630V708L350 718 340 712 322 728V785L343 828M550 350L555 487 568 510 577 570 615 562 628 545 665 537 745 532 822 522 890 500 955 432 1005 415 1020 447 1085 565M692 320L822 522M683 537L665 615V717M955 432L937 383 955 385 988 347 1045 373 1040 430 1020 447M1045 373L1080 347 1145 290 1415 265M575 650h8v5h-8z" />
      <ellipse cx="906" cy="573" rx="9" ry="12" {...NS} />
    </g>
    <g transform="translate(2640 480) scale(.33333 .44643)">
      <path fill="#5b5989" stroke="none" d="M380 705L412 714 440 722 457 742 428 1230 413 1260 422 1285 436 1298 410 1350 380 1360z" />
      <path {...NS} d="M411 694V714L440 722 457 742 448 950 428 1230 418 1232 415 1262 422 1285 436 1298 410 1350M400 776H452M400 873L450 870M400 960L442 957M400 1047L436 1045M400 1065L436 1052M400 1155H428M400 1230H425M400 1315H425M411 110V122" />
    </g>
  </svg>
);

const Sep = () => <div className="-mx-[5px] h-[44px] w-0.5 shrink-0 bg-[repeating-linear-gradient(#777_0_2px,transparent_2px_6px)]" />;

const AttributeTable = () => (
  <div className="absolute top-[248px] left-[668px] flex h-[1126px] w-[2109px] flex-col overflow-hidden rounded-[10px] bg-[#ebebeb]">
    <div className="relative flex h-[43px] shrink-0 items-center border-t-2 border-b-2 border-t-[#f6f6f6] border-b-[#ababab] bg-[linear-gradient(#eaeaea,#d2d2d2)] pl-4">
      <div className="flex gap-4">
        <div className="size-6 rounded-full border border-[#d9544c] bg-[#ed6a5e]" />
        <div className="size-6 rounded-full border border-[#dba03c] bg-[#f5bf4f]" />
        <div className="size-6 rounded-full border border-[#4ca93e] bg-[#61c554]" />
      </div>
      <div className="mr-[118px] flex-1 text-center font-['Inter',sans-serif] text-[26px] leading-[34px] tracking-[0.45px] whitespace-nowrap text-[#484848]">
        tl_2017_36_cousub :: Features total: 1023, filtered: 1, selected: 1
      </div>
    </div>
    <div className="flex h-[59px] shrink-0 items-center gap-7 border-t-2 border-b-2 border-t-white border-b-[#8b8b8b] bg-[linear-gradient(#eeeeee,#c6c6c6)] pb-1 pl-3">
      <Pencil s={32} /><EditMulti /><SaveEdits s={32} /><Refresh s={32} /><Sep />
      <SelExpr s={32} /><SelectAll /><Invert /><Deselect s={32} /><Funnel /><MoveTop /><PanSel s={32} /><ZoomSel s={32} /><Sep />
      <CopyIcon s={32} o={0.7} /><PasteIcon s={32} dark /><Sep />
      <Field c="#f5dc6a" bc={GOLD} k="star" /><Field c="#f2a0a0" bc="#d9504f" k="no" /><Abacus s={32} /><Sep />
      <Conditional />
    </div>
    <div className="mx-0.5 flex min-h-0 flex-1 flex-col overflow-hidden border-r border-b-2 border-r-[#b5b5b5] border-b-[#b0b0b0] bg-white">
      <div className="flex h-[42px] shrink-0 items-center border-b-2 border-[#cccccc] bg-[#f5f5f5] pl-8">
        {columns.map(([h]) => (
          <div key={h} className="h-8 w-[200px] shrink-0 border-r-2 border-[#d8d8d8] pb-1 text-center text-[26px] leading-[30px] text-[#0a0a0a]">{h}</div>
        ))}
      </div>
      <div className="flex h-[60px] shrink-0 border-b-2 border-[#9c9c9c]">
        <div className="w-8 shrink-0 bg-[#f5f5f5] pt-[10px] pr-0.5 text-center text-[26px] leading-[34px] text-black">1</div>
        {columns.map(([h, v], i) => (
          <div key={h} className={i === 0
            ? "w-[200px] shrink-0 border-4 border-[#00ff7f] border-r-[#00ff7f] bg-[#b1d6fe] pt-[6px] pl-[6px] text-[26px] leading-[34px] text-black"
            : "w-[200px] shrink-0 border-r-2 border-[#9c9c9c] bg-[#b1d6fe] pt-[10px] pl-[10px] text-[26px] leading-[34px] text-black"}>{v}</div>
        ))}
      </div>
      <div className="flex-1 bg-[linear-gradient(90deg,#ebebeb_32px,#fff_32px)]" />
      <div className="h-[29px] shrink-0 border-t-2 border-[#e8e8e8] bg-[#fafafa] pt-1.5 pl-0.5">
        <div className="h-4 w-[1164px] rounded-full bg-[#c1c1c1]" />
      </div>
    </div>
    <div className="flex h-[58px] shrink-0 items-start justify-between pr-[6px] pl-[6px]">
      <div className="flex h-[51px] w-[360px] items-center border-2 border-[#ababab] bg-[linear-gradient(#e4e4e4,#f6f6f6)] pl-2">
        <Funnel />
        <div className="-mt-1 ml-[7px] text-[26px] tracking-[-0.14px] whitespace-nowrap text-black">Show Selected Features</div>
        <svg width="14" height="10" className="mt-5 ml-2 shrink-0"><path d="M0 0h14L7 10z" fill="#222" /></svg>
      </div>
      <div className="flex h-[51px] w-[104px] border-2 border-[#ababab]">
        <div className="flex flex-1 items-center justify-center bg-[#f4f4f4]"><FormIcon /></div>
        <div className="flex flex-1 items-center justify-center border-l-2 border-[#ababab] bg-[linear-gradient(#c4c4c4,#d2d2d2)]"><TableIcon s={32} /></div>
      </div>
    </div>
  </div>
);

export default function App() {
  return (
    <div className="relative flex h-[1812px] w-[3298px] flex-col overflow-hidden bg-white font-['Liberation_Sans',Arial,sans-serif]">
      <div className="relative flex h-[42px] shrink-0 items-center border-b-2 border-[#cfcfcf] bg-[#f6f6f6] pl-[14px]">
        <div className="flex gap-4">
          {[0, 1, 2].map((i) => <div key={i} className="size-6 rounded-full border-2 border-[#d0d0d0] bg-[#dcdcdc]" />)}
        </div>
        <div className="mr-[122px] flex-1 text-center font-['Inter',sans-serif] text-[26px] leading-[34px] tracking-[0.75px] text-[#b2b2b2]">QGIS 2.18.14 - Demo</div>
      </div>
      <Bar h="h-[72px] border-b-2 border-b-[#a8a8a8]">
        <Grip />
        <Slot><NewDoc /></Slot><Slot><FolderOpen /></Slot><Slot><Save /></Slot><Slot><SaveAs /></Slot><Slot><NewComposer /></Slot><Slot><ComposerMgr /></Slot>
        <Grip />
        <Slot><Hand /></Slot><Slot><PanSel /></Slot><Slot><ZoomIn /></Slot><Slot><ZoomOut /></Slot><Slot><Zoom11 /></Slot><Slot><ZoomFull /></Slot>
        <Slot><ZoomSel /></Slot><Slot><ZoomLayer /></Slot><Slot><ZoomLast /></Slot><Slot><ZoomNext /></Slot><Slot><BookmarkNew /></Slot><Slot><Bookmarks /></Slot><Slot><Refresh /></Slot>
        <Grip />
        <Slot><Identify /></Slot><Drop><ActionIcon /></Drop><Drop on><SelectIcon /></Drop><Drop><SelExpr /></Drop>
        <Slot><Deselect /></Slot><Slot><TableIcon /></Slot><Slot><Abacus /></Slot><Slot><Sigma /></Slot><Drop><Ruler /></Drop><Slot><Tips /></Slot><Drop><TextAnno /></Drop>
        <Grip />
        <Slot><Help /></Slot>
      </Bar>
      <Bar h="h-[74px] border-b-[4px] border-b-[#9a9a9a]">
        <Grip />
        <Slot><div className="relative"><Pencils /><div className="absolute -right-1 -bottom-0.5"><Down small /></div></div></Slot>
        <Slot><Pencil /></Slot><Slot><SaveEdits /></Slot><Slot><AddFeature /></Slot><Drop><Circular /></Drop><Slot><MoveFeature /></Slot>
        <Slot><NodeTool /></Slot><Slot><Trash /></Slot><Slot><Scissors /></Slot><Slot><CopyIcon /></Slot><Slot><PasteIcon /></Slot>
        <Grip />
        <Slot><Label /></Slot><Slot><Diagram /></Slot><Slot><LabelPinBox /></Slot><Slot><LabelPin /></Slot><Slot><LabelEye /></Slot><Slot><LabelMove /></Slot><Slot><LabelRot /></Slot><Slot><LabelEdit /></Slot>
        <Grip />
        <Slot><CswIcon /></Slot>
        <Grip />
        <Slot><Python /></Slot>
      </Bar>
      <div className="flex min-h-0 flex-1">
        <div className="flex w-[92px] shrink-0 flex-col bg-[linear-gradient(180deg,rgba(255,255,255,0.25),transparent_340px,transparent_1250px,rgba(255,255,255,0.3)),linear-gradient(90deg,#e4e4e4,#c6c6c6)] pt-[10px]">
          <GripH />
          <div className="mt-[10px] mb-6 flex flex-col gap-7 pl-[10px]">
            <AddVector /><AddRaster /><AddLite />
            <div className="flex items-center pl-3"><AddPg /><div className="mt-5 ml-1"><Down /></div></div>
            <AddWms /><AddWcs /><AddWfs /><Comma /><Virtual />
            <div className="flex items-center pl-3"><NewVector /><div className="mt-6 ml-1"><Down /></div></div>
          </div>
          <GripH />
        </div>
        <div className="flex w-[594px] shrink-0 flex-col border-r-4 border-l-2 border-r-[#979797] border-l-[#b0b0b0]">
          <PanelTitle title="Browser Panel" />
          <Bar h="h-[58px] border-b-2 border-b-[#8f8f8f] pb-0.5 -ml-0.5 pr-0.5">
            <S60><SqAdd /></S60><S60><Refresh s={32} /></S60><S60><Funnel /></S60><S60><TreeArrow up /></S60><S60><InfoDot /></S60>
          </Bar>
          <div className="flex-1 border-r-2 border-b-2 border-l-2 border-[#b4b4b4] bg-white">
            {tree.map(([t, icon, arrow]) => (
              <div key={t} className="flex h-9 items-center pl-[14px]">
                <div className="w-9">{arrow && <svg width="15" height="16" className="block"><path d="M0 0l15 8-15 8z" fill="#8c8c8c" /></svg>}</div>
                {icon}
                <div className="-mt-0.5 ml-3 text-[26px] leading-[34px] whitespace-nowrap text-black">{t}</div>
              </div>
            ))}
          </div>
          <div className="h-px shrink-0 bg-[#9a9a9a]" />
          <PanelTitle title="Layers Panel" />
          <Bar h="h-[59px] border-b-2 border-b-[#8f8f8f] -ml-0.5 pr-0.5">
            <S60><Brush /></S60><S60><AddGroup /></S60><S60><EyeIcon /></S60><S60><Funnel /></S60>
            <div className="flex w-[84px] shrink-0 items-center pl-7"><EpsFilter /><div className="mt-5 ml-0.5"><Down /></div></div>
            <S60><TreeArrow /></S60><S60><TreeArrow up /></S60><S60><SqRemove /></S60>
          </Bar>
          <div className="h-[276px] shrink-0 border-r-2 border-l-2 border-[#b4b4b4] bg-white">
            <div className="flex h-10 items-center bg-[#cfcfcf] pl-[54px]">
              <svg width="27" height="27" viewBox="0 0 27 27" fill="none"><rect x="1" y="1" width="25" height="25" rx="4" fill="#e4e4e4" stroke="#b4b4b4" strokeWidth="2" /><path d="M7 15l4 5 9-13" stroke="#888" strokeWidth="2.500" /></svg>
              <div className="ml-[27px] size-8 border-2 border-[#5c6899] bg-[#737ead]" />
              <div className="-mt-px ml-3 h-[30px] border-b-2 border-black text-[26px] leading-[30px] font-bold whitespace-nowrap text-black">tl_2017_36_cousub</div>
            </div>
          </div>
        </div>
        <div className="min-w-0 flex-1 border-r-2 border-[#b8b8b8] bg-white"><MapCanvas /></div>
      </div>
      <div className="absolute top-[248px] left-[668px] h-[1126px] w-[2109px] rounded-[10px] shadow-[0_0_2px_1px_rgba(0,0,0,0.25),0_38px_72px_rgba(0,0,0,0.52)]" />
      <AttributeTable />
    </div>
  );
}
